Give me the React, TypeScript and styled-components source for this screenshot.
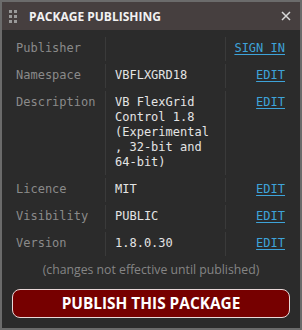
import React from "react";
import styled, { createGlobalStyle } from "styled-components";

const Global = createGlobalStyle`
  html, body { margin: 0; padding: 0; background: #2b2b2b; }
  * { box-sizing: border-box; }
`;

const Panel = styled.div`
  width: 302px;
  height: 330px;
  border: 2px solid #6b6b6b;
  background: #2b2b2b;
  display: flex;
  flex-direction: column;
`;

const TitleBar = styled.div`
  height: 28px;
  background: #463f3f;
  display: flex;
  align-items: center;
  padding: 0 8px 0 7px;
`;

const Grip = styled.div`
  display: grid;
  grid-template-columns: 3px 3px;
  grid-auto-rows: 3px;
  gap: 2px 2px;
  margin-right: 12px;
  & > span { background: #9a9a9a; }
`;

const Title = styled.div`
  flex: 1;
  font-family: "Open Sans", sans-serif;
  font-weight: 700;
  font-size: 12px;
  color: #f2f2f2;
`;

const Close = styled.button`
  background: none;
  border: none;
  padding: 0;
  width: 12px;
  height: 12px;
  display: flex;
  align-items: center;
  justify-content: center;
  cursor: pointer;
`;

const Rows = styled.div`
  display: flex;
  flex-direction: column;
  gap: 3px;
  padding: 7px 6px 0 6px;
`;

const Row = styled.div`
  display: flex;
  font-family: "DejaVu Sans Mono", monospace;
  font-size: 12px;
  line-height: 15px;
`;

const Label = styled.div`
  width: 97px;
  padding: 4px 0 5px 8px;
  color: #8a8a8a;
`;

const Value = styled.div`
  width: 121px;
  padding: 4px 12px 5px 9px;
  border-left: 1px solid #3a3a3a;
  border-right: 1px solid #3a3a3a;
  color: #e4e4e4;
  overflow-wrap: break-word;
  word-break: break-word;
`;

const Action = styled.div`
  flex: 1;
  padding: 4px 9px 5px 0;
  text-align: right;
`;

const Link = styled.a`
  color: #3ea3d9;
  text-decoration: underline;
  text-underline-offset: 2px;
  cursor: pointer;
`;

const Note = styled.div`
  margin-top: 6px;
  text-align: center;
  font-family: "Open Sans", sans-serif;
  font-size: 12.25px;
  line-height: 16px;
  color: #858585;
`;

const PublishButton = styled.button`
  margin: 11px 10px 0 10px;
  height: 29px;
  border: 1px solid #e8d8d8;
  border-radius: 8px;
  background: #760000;
  color: #ffffff;
  font-family: "Open Sans", sans-serif;
  font-weight: 700;
  font-size: 15.4px;
  line-height: 1;
  cursor: pointer;
`;

const rows: { label: string; value: string; action: string }[] = [
  { label: "Publisher", value: "", action: "SIGN IN" },
  { label: "Namespace", value: "VBFLXGRD18", action: "EDIT" },
  {
    label: "Description",
    value: "VB FlexGrid Control 1.8 (Experimental, 32-bit and 64-bit)",
    action: "EDIT",
  },
  { label: "Licence", value: "MIT", action: "EDIT" },
  { label: "Visibility", value: "PUBLIC", action: "EDIT" },
  { label: "Version", value: "1.8.0.30", action: "EDIT" },
];

export default function App() {
  return (
    <>
      <Global />
      <Panel>
        <TitleBar>
          <Grip>
            {Array.from({ length: 6 }).map((_, i) => (
              <span key={i} />
            ))}
          </Grip>
          <Title>PACKAGE PUBLISHING</Title>
          <Close aria-label="Close">
            <svg width="10" height="10" viewBox="0 0 10 10">
              <path d="M1 1 L9 9 M9 1 L1 9" stroke="#d8d8d8" strokeWidth="1.5" />
            </svg>
          </Close>
        </TitleBar>
        <Rows>
          {rows.map((r) => (
            <Row key={r.label}>
              <Label>{r.label}</Label>
              <Value>{r.value}</Value>
              <Action>
                <Link>{r.action}</Link>
              </Action>
            </Row>
          ))}
        </Rows>
        <Note>(changes not effective until published)</Note>
        <PublishButton>PUBLISH THIS PACKAGE</PublishButton>
      </Panel>
    </>
  );
}
